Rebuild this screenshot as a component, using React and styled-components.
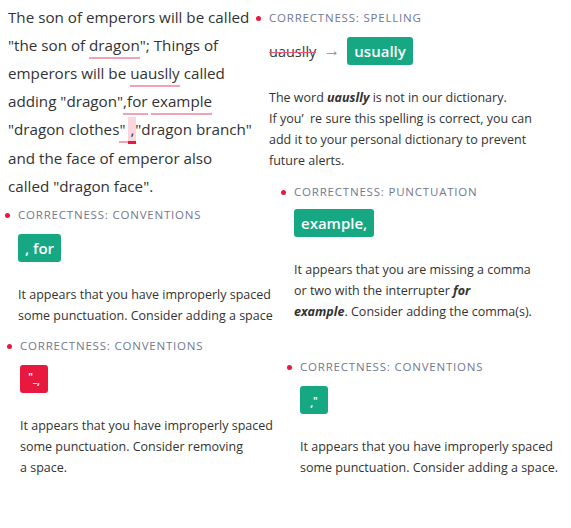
import React from 'react'
import styled, { createGlobalStyle } from 'styled-components'

const GlobalStyle = createGlobalStyle`
  html, body {
    margin: 0;
    padding: 0;
    background: #fff;
  }
  body {
    font-family: 'Open Sans', 'Noto Sans', sans-serif;
    color: #333;
  }
`

const Page = styled.div`
  display: grid;
  grid-template-columns: 255px 1fr;
  width: 571px;
  height: 528px;
  overflow: hidden;
`

const Column = styled.div`
  display: flex;
  flex-direction: column;
  align-items: flex-start;
`

const Passage = styled.p`
  margin: 3px 0 0 8px;
  font-size: 15.2px;
  line-height: 28px;
  color: #333;
  white-space: nowrap;
`

const Mark = styled.span`
  display: inline-block;
  line-height: 24px;
  padding: 0 ${(p) => (p.$strong ? 2 : 0)}px;
  margin: 0 ${(p) => (p.$strong ? -1 : 0)}px;
  border-bottom: ${(p) => (p.$strong ? '3px solid #e8183f' : '2.5px solid #f5a0b4')};
  background: ${(p) => (p.$strong ? '#fcd6df' : 'transparent')};
  white-space: pre;
`

const Card = styled.div`
  margin-top: ${(p) => p.$top}px;
  margin-left: ${(p) => p.$left}px;
  display: flex;
  flex-direction: column;
  align-items: flex-start;
`

const Header = styled.div`
  position: relative;
  height: 16px;
  line-height: 16px;
  font-size: 11.5px;
  letter-spacing: 0.8px;
  color: #737892;
  text-transform: uppercase;
  white-space: nowrap;

  &::before {
    content: '';
    position: absolute;
    left: -13px;
    top: 6px;
    width: 5px;
    height: 5px;
    border-radius: 50%;
    background: #e8183f;
  }
`

const SuggestionRow = styled.div`
  display: flex;
  align-items: center;
  gap: 7px;
  margin-top: ${(p) => p.$gap ?? 11}px;
`

const Wrong = styled.span`
  position: relative;
  font-size: 14.5px;
  color: #3a3a3a;

  &::after {
    content: '';
    position: absolute;
    left: 0;
    right: 0;
    top: 55%;
    height: 1.5px;
    background: #e8586f;
  }
`

const Arrow = styled.span`
  font-family: 'Liberation Sans', sans-serif;
  font-size: 17px;
  color: #8a90a6;
`

const Badge = styled.span`
  display: inline-flex;
  align-items: center;
  justify-content: center;
  height: 28px;
  min-width: 28px;
  box-sizing: border-box;
  padding: 0 ${(p) => (p.$tiny ? 0 : 7)}px;
  border-radius: 3px;
  background: ${(p) => (p.$tone === 'red' ? '#e8183f' : '#15a883')};
  color: #fff;
  font-size: ${(p) => (p.$tiny ? '10px' : '15px')};
  font-weight: ${(p) => (p.$tiny ? 700 : 600)};
  white-space: pre;
`

const Glyph = styled.span`
  position: relative;
  top: ${(p) => p.$shift || 0}px;
  line-height: 1;
`

const Description = styled.p`
  margin: 22px 0 0;
  font-size: 12.5px;
  line-height: 21px;
  color: #333;
  white-space: nowrap;

  b {
    font-style: italic;
    font-weight: 700;
  }
`

export default function App() {
  return (
    <>
      <GlobalStyle />
      <Page>
        <Column>
          <Passage>
            The son of emperors will be called<br />
            "the son of <Mark>dragon</Mark>"; Things of<br />
            emperors will be <Mark>uauslly</Mark> called<br />
            adding "dragon"<Mark>,for</Mark> <Mark>example</Mark><br />
            "dragon clothes<Mark>" </Mark><Mark $strong>,</Mark>"dragon branch"<br />
            and the face of emperor also<br />
            called "dragon face".
          </Passage>

          <Card $top={7} $left={18}>
            <Header>Correctness: Conventions</Header>
            <SuggestionRow>
              <Badge>, for</Badge>
            </SuggestionRow>
            <Description>
              It appears that you have improperly spaced<br />
              some punctuation. Consider adding a space
            </Description>
          </Card>

          <Card $top={12} $left={20}>
            <Header>Correctness: Conventions</Header>
            <SuggestionRow>
              <Badge $tone="red" $tiny>
                <Glyph $shift={-2}>"</Glyph>
                <Glyph $shift={-1}>_</Glyph>
                <Glyph $shift={2}>,</Glyph>
              </Badge>
            </SuggestionRow>
            <Description>
              It appears that you have improperly spaced<br />
              some punctuation. Consider removing<br />
              a space.
            </Description>
          </Card>
        </Column>

        <Column>
          <Card $top={10} $left={14}>
            <Header>Correctness: Spelling</Header>
            <SuggestionRow>
              <Wrong>uauslly</Wrong>
              <Arrow>→</Arrow>
              <Badge>usually</Badge>
            </SuggestionRow>
            <Description>
              The word <b>uauslly</b> is not in our dictionary.<br />
              If you’&nbsp;&nbsp;re sure this spelling is correct, you can<br />
              add it to your personal dictionary to prevent<br />
              future alerts.
            </Description>
          </Card>

          <Card $top={13} $left={39}>
            <Header>Correctness: Punctuation</Header>
            <SuggestionRow $gap={9}>
              <Badge>example,</Badge>
            </SuggestionRow>
            <Description>
              It appears that you are missing a comma<br />
              or two with the interrupter <b>for</b><br />
              <b>example</b>. Consider adding the comma(s).
            </Description>
          </Card>

          <Card $top={37} $left={45}>
            <Header>Correctness: Conventions</Header>
            <SuggestionRow>
              <Badge $tiny>
                <Glyph $shift={3}>,</Glyph>
                <Glyph $shift={1}>"</Glyph>
              </Badge>
            </SuggestionRow>
            <Description>
              It appears that you have improperly spaced<br />
              some punctuation. Consider adding a space.
            </Description>
          </Card>
        </Column>
      </Page>
    </>
  )
}
